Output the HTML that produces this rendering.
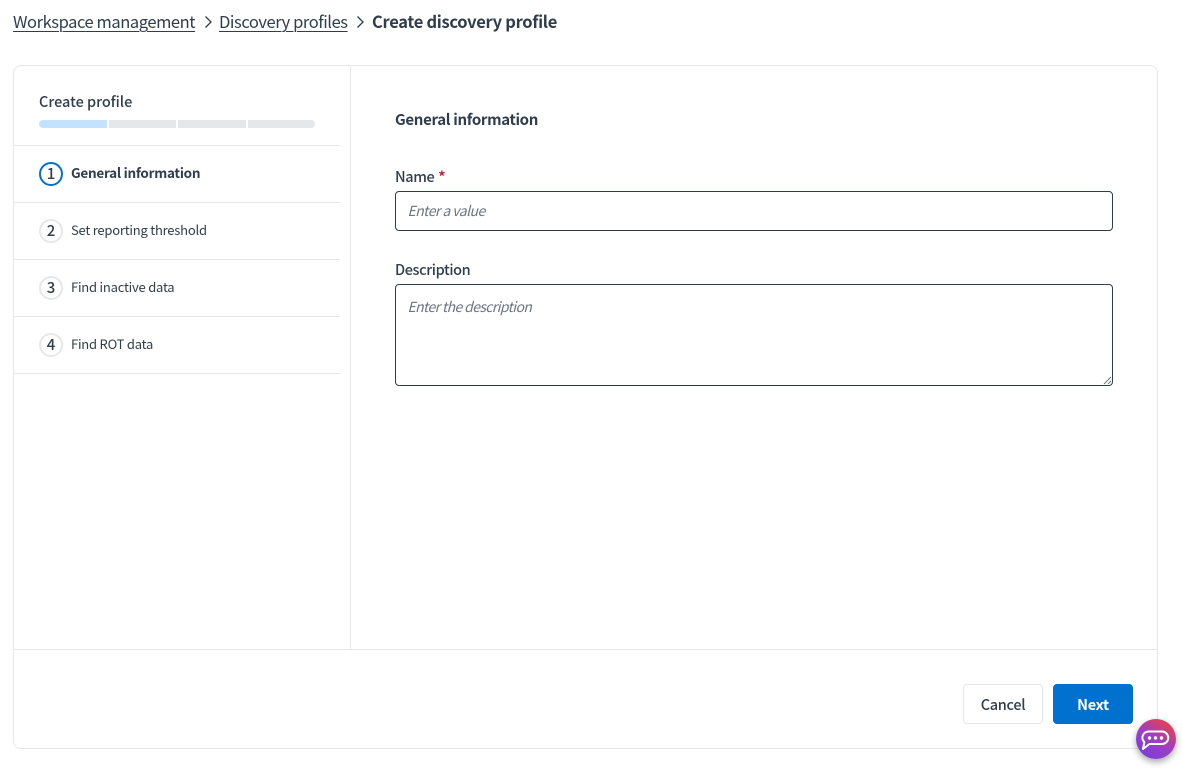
<!DOCTYPE html>
<html lang="en">
<head>
<meta charset="utf-8">
<title>Create discovery profile</title>
<style>
html,body{margin:0;padding:0;background:#fff}
body{width:1183px;height:771px;position:relative;overflow:hidden;font-family:"Liberation Sans","Noto Sans CJK JP",sans-serif;color:#2f3d4d}
.t{position:absolute;white-space:nowrap;font-family:"Noto Sans CJK JP","Liberation Sans",sans-serif;line-height:20px;height:20px}
.b{position:absolute}
.crumb{font-size:16.5px;letter-spacing:-.43px;text-decoration:underline;text-underline-offset:3px;text-decoration-thickness:1px}
.step{font-size:13px;letter-spacing:-.22px}
.num{position:absolute;box-sizing:border-box;width:24px;height:24px;left:39px;border:2.500px solid #e6e7e8;border-radius:50%;text-align:center;font:500 15px/20px "Noto Sans CJK JP",sans-serif;color:#2f3d4d}
.line{position:absolute;left:14px;width:326px;height:1px;background:#e6e7e8}
.seg{position:absolute;top:120px;height:8px;background:#e6e7e8}
.lbl{font-size:14.5px;letter-spacing:-.1px;font-weight:500}
.ph{font-size:14px;font-style:italic;color:#6b7580;letter-spacing:-.55px}
.field{position:absolute;left:395px;width:718px;box-sizing:border-box;border:1px solid #2f3d4d;border-radius:4px;background:#fff}
</style>
</head>
<body>
<a class="t crumb" style="left:13px;top:11px;color:#2f3d4d">Workspace management</a>
<svg class="b" style="left:202px;top:15px" width="12" height="14" viewBox="0 0 12 14"><path d="M3.500 1.500 9 7l-5.500 5.500" fill="none" stroke="#2f3d4d" stroke-width="1.300"/></svg>
<a class="t crumb" style="left:219px;top:11px;color:#2f3d4d">Discovery profiles</a>
<svg class="b" style="left:354px;top:15px" width="12" height="14" viewBox="0 0 12 14"><path d="M3.500 1.500 9 7l-5.500 5.500" fill="none" stroke="#2f3d4d" stroke-width="1.300"/></svg>
<div class="t" style="left:372px;top:11px;font-size:16.5px;font-weight:700;letter-spacing:-.3px">Create discovery profile</div>

<div class="b" style="left:13px;top:65px;width:1145px;height:684px;box-sizing:border-box;border:1px solid #e6e7e8;border-radius:8px"></div>
<div class="b" style="left:350px;top:66px;width:1px;height:583px;background:#e6e7e8"></div>
<div class="b" style="left:14px;top:649px;width:1143px;height:1px;background:#e6e7e8"></div>

<div class="t lbl" style="left:39px;top:92px;letter-spacing:-.03px">Create profile</div>
<div class="seg" style="left:39px;width:68px;background:#c2e2fd;border-radius:4px 0 0 4px"></div>
<div class="seg" style="left:109px;width:67px"></div>
<div class="seg" style="left:178px;width:68px"></div>
<div class="seg" style="left:248px;width:67px;border-radius:0 4px 4px 0"></div>

<div class="line" style="top:145px"></div>
<div class="line" style="top:202px"></div>
<div class="line" style="top:259px"></div>
<div class="line" style="top:316px"></div>
<div class="line" style="top:373px"></div>

<div class="num" style="top:162px;border-color:#0071ce">1</div>
<div class="t step" style="left:71px;top:162px;font-size:13.5px;font-weight:700;letter-spacing:-.27px">General information</div>
<div class="num" style="top:219px">2</div>
<div class="t step" style="left:71px;top:220px">Set reporting threshold</div>
<div class="num" style="top:276px">3</div>
<div class="t step" style="left:71px;top:277px">Find inactive data</div>
<div class="num" style="top:333px">4</div>
<div class="t step" style="left:71px;top:334px">Find ROT data</div>

<div class="t" style="left:395px;top:110px;font-size:15px;font-weight:700;letter-spacing:-.33px">General information</div>
<div class="t lbl" style="left:395px;top:167px;letter-spacing:-.39px">Name</div>
<div class="t" style="left:438px;top:166px;font-size:16px;font-weight:500;color:#c8102e">*</div>
<div class="field" style="top:191px;height:40px"></div>
<div class="t ph" style="left:407.500px;top:201px">Enter a value</div>
<div class="t lbl" style="left:395px;top:260px;letter-spacing:-.39px">Description</div>
<div class="field" style="top:284px;height:102px"></div>
<div class="t ph" style="left:407.500px;top:297px;letter-spacing:-.62px">Enter the description</div>
<svg class="b" style="left:1103px;top:376px" width="9" height="9" viewBox="0 0 9 9"><path d="M1 8 8 1M5 8 8 5" stroke="#777" stroke-width="1" fill="none"/></svg>

<div class="b" style="left:963px;top:684px;width:80px;height:40px;box-sizing:border-box;border:1px solid #e6e7e8;border-radius:4px"></div>
<div class="t" style="left:963px;top:695px;width:80px;text-align:center;font-size:14.5px;font-weight:500;letter-spacing:-.3px">Cancel</div>
<div class="b" style="left:1053px;top:684px;width:80px;height:40px;background:#0071ce;border-radius:4px"></div>
<div class="t" style="left:1053px;top:695px;width:80px;text-align:center;font-size:14.5px;font-weight:700;letter-spacing:-.3px;color:#fff">Next</div>

<div class="b" style="left:1136px;top:719px;width:40px;height:40px;border-radius:50%;background:linear-gradient(35deg,#7c3fd6 15%,#a03fc0 50%,#ee4040 92%);box-shadow:0 3px 7px rgba(0,0,0,.35)"></div>
<svg class="b" style="left:1136px;top:719px" width="40" height="40" viewBox="0 0 40 40"><path d="M13 12.500h13a6.250 6.250 0 0 1 0 12.500H13.500L7 30l1.300-6.800A6.250 6.250 0 0 1 13 12.500z" fill="none" stroke="#fff" stroke-width="2" stroke-linejoin="round"/><circle cx="13.500" cy="19" r="1.700" fill="#fff"/><circle cx="19.500" cy="19" r="1.700" fill="#fff"/><circle cx="25.500" cy="19" r="1.700" fill="#fff"/></svg>
</body>
</html>
